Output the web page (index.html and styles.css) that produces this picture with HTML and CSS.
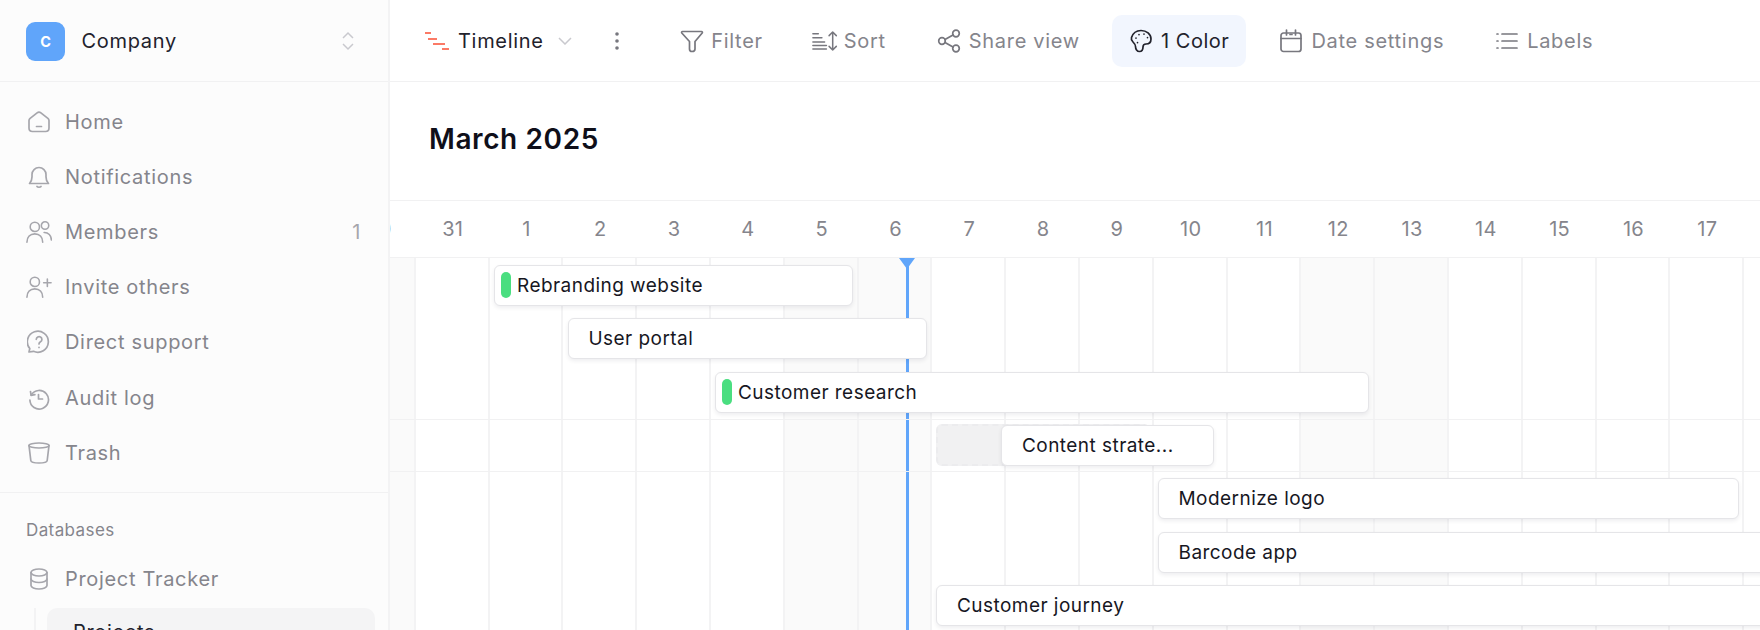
FILE: index.html
```html
<!DOCTYPE html>
<html lang="en">
<head>
<meta charset="utf-8">
<title>Timeline</title>
<link rel="stylesheet" href="styles.css">
</head>
<body>
<div class="app">
  <aside class="sidebar">
    <header class="company">
      <span class="avatar">C</span>
      <span class="company-name">Company</span>
      <svg class="updown" width="12" height="20" viewBox="0 0 12 20"><path d="M1 7l5-5 5 5M1 13l5 5 5-5"/></svg>
    </header>
    <nav class="nav">
      <a class="nav-item"><svg class="ic" viewBox="0 0 24 24"><path d="M2 10.500c0-.9.4-1.500 1.100-2.100l7-5.600c1.100-.9 2.700-.9 3.800 0l7 5.600c.7.6 1.100 1.200 1.100 2.100V18c0 2-1.500 3.500-3.500 3.500h-13C3.500 21.500 2 20 2 18z"/><path d="M9.500 16.500h5"/></svg><span>Home</span></a>
      <a class="nav-item"><svg class="ic" viewBox="0 0 24 24"><path d="M2.500 18.500h19c-1.600-1.700-2.500-3.200-2.500-6.500V9.500a7 7 0 0 0-14 0V12c0 3.300-.9 4.800-2.500 6.500z"/><path d="M10 21.500c.7 1 3.300 1 4 0"/></svg><span>Notifications</span></a>
      <a class="nav-item"><svg class="ic wide" viewBox="0 0 28 24"><circle cx="9.500" cy="6.500" r="5"/><path d="M1 23c0-5.500 3.500-9 8.500-9s8.500 3.500 8.500 9"/><circle cx="20.500" cy="5" r="4"/><path d="M19.500 12.500c4.500-.2 7.800 3.200 7.800 8"/></svg><span>Members</span><em class="count">1</em></a>
      <a class="nav-item"><svg class="ic wide" viewBox="0 0 28 24"><circle cx="9.500" cy="6.500" r="5"/><path d="M1 23c0-5.500 3.500-9 8.500-9s8.500 3.500 8.500 9"/><path d="M23 3.500v8M19 7.500h8"/></svg><span>Invite others</span></a>
      <a class="nav-item"><svg class="ic" viewBox="0 0 24 24"><path d="M2 22l.8-3.500A10.500 10.500 0 1 1 6.500 21.300z"/><path d="M9.300 9.300a2.800 2.800 0 1 1 4.200 2.500c-1 .6-1.500 1.100-1.500 2.200"/><path d="M12 17.300v.2"/></svg><span>Direct support</span></a>
      <a class="nav-item"><svg class="ic" viewBox="0 0 24 24"><path d="M3.500 5.500l.6 3.800 3.800-.6"/><path d="M4.200 9a9.300 9.300 0 1 1-1.300 5"/><path d="M11.500 8.500v4.500h4"/></svg><span>Audit log</span></a>
      <a class="nav-item"><svg class="ic" viewBox="0 0 24 24"><ellipse cx="12" cy="4.500" rx="10" ry="2.500"/><path d="M2 4.500l1.800 15c.2 1.600 4 2.500 8.200 2.500s8-.9 8.200-2.500L22 4.500"/></svg><span>Trash</span></a>
    </nav>
    <section class="databases">
      <h2 class="section-label">Databases</h2>
      <a class="nav-item"><svg class="ic" viewBox="0 0 24 24"><ellipse cx="12" cy="5.500" rx="8" ry="3.500"/><path d="M4 5.500v13c0 1.900 3.600 3.500 8 3.500s8-1.600 8-3.500v-13"/><path d="M4 12c0 1.900 3.600 3.500 8 3.500s8-1.600 8-3.500"/></svg><span>Project Tracker</span></a>
      <div class="tree">
        <a class="tree-item">Projects</a>
      </div>
    </section>
  </aside>

  <main class="main">
    <div class="toolbar">
      <div class="view-switch">
        <svg class="timeline-ic" width="24" height="20" viewBox="0 0 24 20"><path d="M0 2h6M3 8h9M8 13h12M17 18h7"/></svg>
        <span class="view-name">Timeline</span>
        <svg class="chev" width="14" height="8" viewBox="0 0 14 8"><path d="M1 1l6 6 6-6"/></svg>
      </div>
      <svg class="dots" width="4" height="18" viewBox="0 0 4 18"><circle cx="2" cy="2" r="1.800"/><circle cx="2" cy="9" r="1.800"/><circle cx="2" cy="16" r="1.800"/></svg>
      <div class="tools">
        <a class="tool tool-filter"><svg class="ic" viewBox="0 0 24 24"><path d="M2.500 2.500h19c.8 0 1.200.9.700 1.500L15 12.500V20c0 1.800-1.400 2.500-3 2.500s-2.500-.8-2.500-2.500v-7.500L1.800 4c-.5-.6-.1-1.500.7-1.500z"/></svg><span>Filter</span></a>
        <a class="tool tool-sort"><svg class="ic sort-ic" viewBox="0 0 30 24"><path d="M1 4h6M1 8.500h10M1 13h13M1 17h15M1 21h15"/><path d="M23 2v20M19 6l4-4 4 4M19 18l4 4 4-4"/></svg><span>Sort</span></a>
        <a class="tool"><svg class="ic" viewBox="0 0 24 24"><circle cx="19" cy="4.500" r="3.300"/><circle cx="5" cy="12" r="3.300"/><circle cx="19" cy="19.500" r="3.300"/><path d="M8 10.500l8-4.500M8 13.500l8 4.500"/></svg><span>Share view</span></a>
        <a class="tool tool-active"><svg class="ic" viewBox="0 0 24 24"><path d="M12 1.500c5.500 0 10 3.700 10 8.500 0 3.500-2.500 5-5 5-2 0-3 1-3 3 0 3-1.500 4.500-3.500 4.500-2.500 0-4-2.500-4-5 0-2-1-3-2.500-4.500C2.500 11.500 2 10 2.500 8.500 4 4 7.500 1.500 12 1.500z"/><path class="pt" d="M7 9v.1M10 5.500v.1M15 5v.1M18.500 8.500v.1M8.500 13.500v.1"/></svg><span>1 Color</span></a>
        <a class="tool tool-date"><svg class="ic" viewBox="0 0 24 24"><rect x="2" y="4" width="20" height="18.500" rx="2.500"/><path d="M2 9.500h20M7.500 1v5M16.500 1v5M11 5.500h2"/></svg><span>Date settings</span></a>
        <a class="tool"><svg class="ic" viewBox="0 0 24 24"><path d="M7 5h15M7 12h15M7 19h15M2 5h1M2 12h1M2 19h1"/></svg><span>Labels</span></a>
      </div>
    </div>

    <h1 class="month">March 2025</h1>

    <div class="days">
      <span>30</span><span>31</span><span>1</span><span>2</span><span>3</span><span>4</span><span>5</span><span>6</span><span>7</span><span>8</span><span>9</span><span>10</span><span>11</span><span>12</span><span>13</span><span>14</span><span>15</span><span>16</span><span>17</span><span>18</span>
    </div>

    <div class="chart">
      <div class="columns">
        <i class="off"></i><i></i><i></i><i></i><i></i><i></i><i class="off"></i><i class="off"></i><i></i><i></i><i></i><i></i><i></i><i class="off"></i><i class="off"></i><i></i><i></i><i></i><i></i><i></i>
      </div>
      <div class="today"></div>
      <section class="group group-a">
        <div class="bar" style="margin-left:104px;width:359px"><b class="pill"></b><span>Rebranding website</span></div>
        <div class="bar plain" style="margin-left:177.500px;width:359px"><span>User portal</span></div>
        <div class="bar" style="margin-left:325px;width:654px"><b class="pill"></b><span>Customer research</span></div>
      </section>
      <section class="group group-b">
        <div class="ghost"></div>
        <div class="bar plain" style="margin-left:611px;width:213px"><span>Content strate...</span></div>
      </section>
      <section class="group group-c">
        <div class="bar plain" style="margin-left:767.500px;width:581px"><span>Modernize logo</span></div>
        <div class="bar plain" style="margin-left:767.500px;width:900px"><span>Barcode app</span></div>
        <div class="bar plain" style="margin-left:546px;width:1100px"><span>Customer journey</span></div>
      </section>
    </div>
  </main>
</div>
</body>
</html>
```
FILE: styles.css
```css
* { box-sizing: border-box; }
html, body { margin: 0; height: 100%; overflow: hidden; }
body { font-family: Inter, "Liberation Sans", sans-serif; background: #fff; color: #17171f; }
a { display: flex; }
.app { display: flex; height: 630px; width: 1760px; overflow: hidden; }

/* sidebar */
.sidebar { flex: none; width: 390px; background: #fcfcfc; border-right: 2px solid #f3f3f4; }
.company { display: flex; align-items: center; height: 82px; padding: 1px 34px 0 26px; border-bottom: 1.500px solid #f1f1f2; }
.avatar { display: flex; align-items: center; justify-content: center; width: 39px; height: 39px; border-radius: 9px; background: #60a5fa; color: #fff; font-size: 14.500px; font-weight: 700; }
.company-name { margin-left: 16.500px; flex: 1; font-size: 20px; font-weight: 400; letter-spacing: .7px; color: #22222c; }
.updown { fill: none; stroke: #c9c9ce; stroke-width: 1.500; }
.nav { display: flex; flex-direction: column; height: 411px; padding-top: 12.500px; border-bottom: 1.500px solid #f1f1f2; }
.nav-item { flex: none; align-items: center; height: 55.100px; padding: 0 26px; font-size: 20px; font-weight: 400; letter-spacing: .68px; color: #85858c; }
.nav-item > span { margin-left: 15px; flex: 1; }
.ic { flex: none; width: 24px; height: 24px; fill: none; stroke: #a6a6ac; stroke-width: 1.700; stroke-linecap: round; stroke-linejoin: round; }
.nav-item .ic { margin-left: 1px; margin-right: -1px; }
.nav-item .ic.wide { margin-left: 0; margin-right: -1px; width: 26px; }
.nav-item .ic.wide + span { margin-left: 14px; }
.count { font-style: normal; font-weight: 400; color: #a6a6ac; margin-right: 1px; margin-left: auto; }
.databases { display: flex; flex-direction: column; }
.section-label { margin: 26px 26px 19px; height: 22px; font-size: 17px; line-height: 22px; font-weight: 400; letter-spacing: .4px; color: #85858c; }
.databases .nav-item { height: 38px; }
.tree { margin: 10px 0 0 34px; padding: 0 13px 0 11px; border-left: 2px solid #f3f3f4; }
.tree-item { align-items: center; height: 48px; padding-left: 26px; border-radius: 10px; background: #f4f4f5; font-size: 20px; font-weight: 400; letter-spacing: .68px; color: #22222c; }

/* main */
.main { flex: 1; min-width: 0; display: flex; flex-direction: column; overflow: hidden; }
.toolbar { flex: none; display: flex; align-items: center; height: 82px; padding: 1px 0 0 35px; border-bottom: 1.500px solid #f1f1f2; }
.view-switch { display: flex; align-items: center; }
.timeline-ic { fill: none; stroke: #fb7a66; stroke-width: 2; }
.view-name { margin-left: 9px; font-size: 20px; font-weight: 400; letter-spacing: .7px; color: #22222c; }
.chev { margin-left: 14px; fill: none; stroke: #c9c9ce; stroke-width: 1.500; }
.dots { margin-left: 43px; fill: #77777e; }
.tools { display: flex; align-items: center; gap: 17px; margin-left: 44.500px; }
.tool { align-items: center; gap: 8px; height: 52px; padding: 0 17px; border-radius: 10px; font-size: 20px; font-weight: 400; letter-spacing: .7px; color: #85858c; }
.tool .ic { stroke: #77777e; }
.tool-filter { gap: 7px; }
.tool .sort-ic { width: 27px; }
.tool-sort { gap: 5px; margin-left: -2px; }
.tool-active { margin-left: -2px; letter-spacing: .55px; background: #f2f6fe; color: #22222c; }
.tool-active .ic { stroke: #22222c; }
.tool-date { margin-left: -1px; }

.month { flex: none; display: flex; align-items: center; height: 117.500px; margin: 0; padding: 0 0 3px 39px; font-size: 28px; font-weight: 600; letter-spacing: .6px; color: #0f0f1a; }

.days { flex: none; display: flex; height: 57.500px; margin-left: -48px; border-top: 1.500px solid #f1f1f2; }
.days span { flex: none; width: 73.800px; display: flex; align-items: center; justify-content: center; font-size: 20px; letter-spacing: .3px; color: #85858c; }

.chart { flex: 1; min-height: 0; position: relative; border-top: 1.500px solid #f1f1f2; }
.columns { position: absolute; top: 0; bottom: 0; left: -48px; display: flex; }
.columns i { flex: none; width: 73.800px; border-right: 2px solid #f3f3f4; }
.columns i.off { background: #fafafa; }
.today { position: absolute; top: 0; bottom: 0; left: 515.500px; width: 3.500px; background: #60a5fa; }
.today::before { content: ""; position: absolute; top: 0; left: -6.500px; border: 8px solid transparent; border-top: 11px solid #60a5fa; border-bottom: 0; }
.group { position: relative; display: flex; flex-direction: column; gap: 12.500px; }
.group-a { height: 161.500px; padding-top: 6.500px; border-bottom: 1.500px solid #f1f1f2; }
.group-b { height: 52px; padding-top: 5px; border-bottom: 1.500px solid #f1f1f2; }
.group-c { padding-top: 6.500px; }
.bar { flex: none; position: relative; display: flex; align-items: center; height: 41px; padding-left: 20px; background: #fff; border: 1.500px solid #e5e5e8; border-radius: 6px; box-shadow: 0 2px 4px rgba(20, 20, 40, .07); font-size: 19px; font-weight: 400; letter-spacing: .45px; color: #17171f; white-space: nowrap; }
.bar:not(.plain) { padding-left: 6px; }
.pill { flex: none; width: 10px; height: 26px; margin-right: 6px; border-radius: 5px; background: #4ade80; }
.ghost { position: absolute; top: 4px; left: 546px; width: 214px; height: 42px; border: 2px dashed #ececee; border-radius: 6px; background: #f1f1f2; }
```
